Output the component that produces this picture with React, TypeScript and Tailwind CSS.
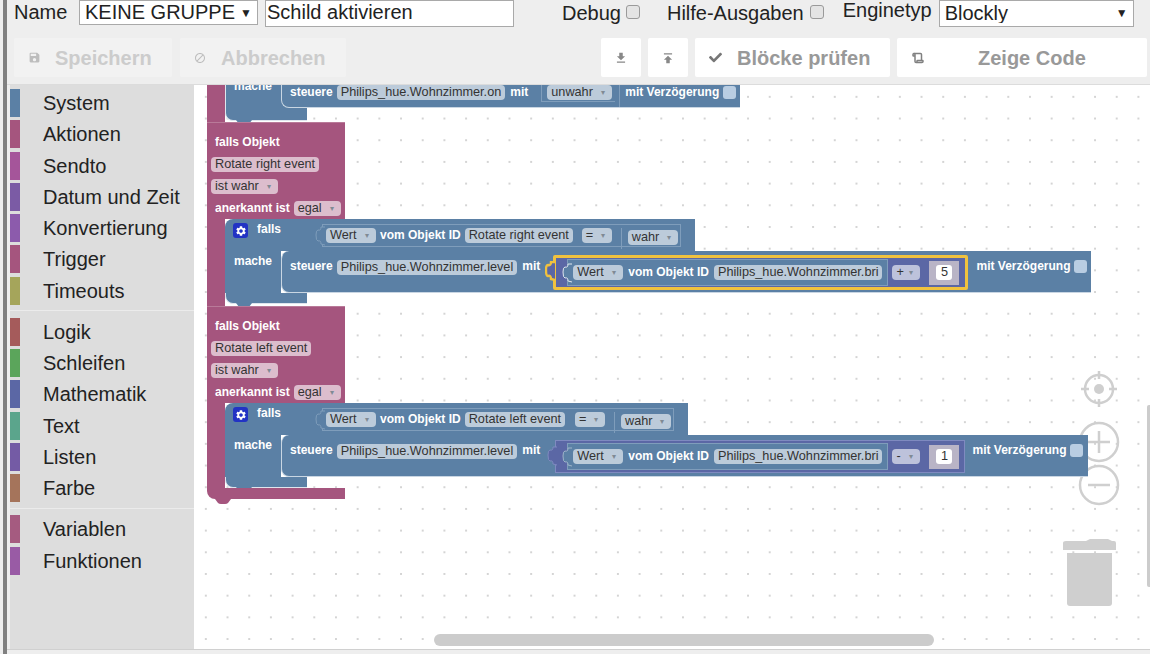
import React from 'react';
import { MdSave, MdBlock, MdFileDownload, MdSettings } from 'react-icons/md';
import { FaCheck } from 'react-icons/fa';
import { Scroll } from 'lucide-react';

const categories = [
  [
    { name: 'System', bar: 'bg-[#5b80a5]' },
    { name: 'Aktionen', bar: 'bg-[#a5557e]' },
    { name: 'Sendto', bar: 'bg-[#a5559a]' },
    { name: 'Datum und Zeit', bar: 'bg-[#7b5ba5]' },
    { name: 'Konvertierung', bar: 'bg-[#8c5bac]' },
    { name: 'Trigger', bar: 'bg-[#a5557e]' },
    { name: 'Timeouts', bar: 'bg-[#a5a55b]' },
  ],
  [
    { name: 'Logik', bar: 'bg-[#a55b5b]' },
    { name: 'Schleifen', bar: 'bg-[#5ba55b]' },
    { name: 'Mathematik', bar: 'bg-[#5b67a5]' },
    { name: 'Text', bar: 'bg-[#5ba58c]' },
    { name: 'Listen', bar: 'bg-[#745ba5]' },
    { name: 'Farbe', bar: 'bg-[#a5745b]' },
  ],
  [
    { name: 'Variablen', bar: 'bg-[#a55b80]' },
    { name: 'Funktionen', bar: 'bg-[#995ba5]' },
  ],
];

const Pill: React.FC<{ text: string; arrow?: boolean; className?: string }> = ({ text, arrow, className = 'bg-[#bccbda]' }) => (
  <span
    className={`flex h-[15px] shrink-0 items-center justify-between whitespace-nowrap rounded-[4px] pl-[4px] text-[12.7px] font-normal leading-[15px] text-[#333] ${arrow ? 'pr-[7px]' : 'pr-[4px]'} ${className}`}
  >
    {text}
    {arrow && <span className="text-[8px] leading-none text-[#808a94]">▾</span>}
  </span>
);

const Label: React.FC<{ text: string; className?: string }> = ({ text, className = '' }) => (
  <span className={`block h-[15px] shrink-0 whitespace-nowrap text-[12px] font-bold leading-[15px] text-white ${className}`}>{text}</span>
);

const Notch: React.FC<{ className: string; fill: string }> = ({ className, fill }) => (
  <svg viewBox="0 0 16 5" className={`absolute h-[5px] w-[16px] ${className}`}>
    <path d="M0 0 L3 4 Q4 5 6 5 L10 5 Q12 5 13 4 L16 0 Z" fill={fill} />
  </svg>
);

// puzzle tab on the left edge of a value block
const Tab: React.FC<{ className: string; fill: string; stroke: string; width?: number }> = ({ className, fill, stroke, width = 1 }) => (
  <svg viewBox="0 0 10 20" className={`absolute h-[20px] w-[10px] ${className}`}>
    <path d="M10 1 L6 1 Q6 5 3 4 Q1 4 1 9 Q1 15 3 15 Q6 14 6 18 L10 19" fill={fill} stroke={stroke} strokeWidth={width} />
  </svg>
);

const Check: React.FC<{ className?: string }> = ({ className = '' }) => (
  <span className={`h-[13px] w-[13px] shrink-0 rounded-[3px] bg-[#b9cde2] ${className}`} />
);

const ValueBlock: React.FC<{ event: string; wide: string }> = ({ event, wide }) => (
  <div className="relative mt-[5px] flex h-[23px] items-start border border-[#7f9dbb] pl-[3px] pt-[3px]">
    <Tab className="left-[-8px] top-[1px]" fill="#5b80a5" stroke="#7f9dbb" />
    <Pill text="Wert" arrow className="w-[50px] bg-[#bccbda]" />
    <Label text="vom Objekt ID" className="ml-[4px]" />
    <span className="ml-[4px]">
      <Pill text={event} />
    </span>
    <Pill text="=" arrow className={`w-[30px] bg-[#bccbda] ${wide}`} />
    <div className="relative ml-[9px] flex h-[21px] w-[59px] items-start border-l border-[#7f9dbb] pl-[6px] pt-[2px]">
      <Pill text="wahr" arrow className="w-[50px] bg-[#bccbda]" />
    </div>
  </div>
);

const MathBlock: React.FC<{ selected?: boolean; operator: string; value: string }> = ({ selected, operator, value }) => (
  <div
    className={
      selected
        ? 'relative ml-[13px] mt-[-5px] shrink-0 rounded-[2px] border-[3px] border-[#f0c23e]'
        : 'relative ml-[15px] mt-[-4px] shrink-0 border border-[#7f8ac0]'
    }
  >
    {selected ? (
      <Tab className="left-[-11px] top-[3px]" fill="#5b67a5" stroke="#f0c23e" width={2.4} />
    ) : (
      <Tab className="left-[-9px] top-[5px]" fill="#5b67a5" stroke="#7f8ac0" />
    )}
    <div className={`flex items-center bg-[#5b67a5] pl-[11px] ${selected ? 'h-[29px] pr-[6px]' : 'h-[31px] pr-[5px]'}`}>
      <div className="relative flex h-[27px] items-center border border-[#7f9dbb] bg-[#5b80a5] pl-[5px] pr-[5px]">
        <Tab className="left-[-6px] top-[3px]" fill="#5b80a5" stroke={selected ? '#dfe6ee' : '#9fb4c9'} />
        <Pill text="Wert" arrow className="w-[50px] bg-[#bccbda]" />
        <Label text="vom Objekt ID" className="ml-[5px]" />
        <span className="ml-[5px]">
          <Pill text="Philips_hue.Wohnzimmer.bri" />
        </span>
      </div>
      <span className="ml-[4px]">
        <Pill text={operator} arrow className="w-[28px] bg-[#bdc2db]" />
      </span>
      <div className="ml-[9px] flex h-[24px] w-[30px] items-center justify-center bg-[#b9b4c6]">
        <span className="h-[15px] w-[16px] rounded-[3px] bg-white text-center text-[12.7px] leading-[15px] text-[#333]">{value}</span>
      </div>
    </div>
  </div>
);

const SetRow: React.FC<{ event: string; children: React.ReactNode; gap: string; tight?: boolean }> = ({ event, children, gap, tight }) => (
  <div
    className={`relative flex h-[42px] shrink-0 items-start rounded-tl-[8px] rounded-bl-[8px] border-b border-l border-[#c9d6e3] bg-[#5b80a5] pl-[8px] pt-[8px] ${tight ? 'pr-[4px]' : 'pr-[5px]'}`}
  >
    <Label text="steuere" />
    <span className="ml-[4px] mt-[1px]">
      <Pill text={event} />
    </span>
    <Label text="mit" className="ml-[5px]" />
    <div className="mt-[1px]">{children}</div>
    <Label text="mit Verzögerung" className={gap} />
    <Check className="ml-[3px] mt-[1px]" />
  </div>
);

const TriggerBlock: React.FC<{ className: string; event: string; children: React.ReactNode; condition: React.ReactNode }> = ({
  className,
  event,
  children,
  condition,
}) => (
  <div className={`absolute flex flex-col ${className}`}>
    <div className="flex h-[97px] w-[138px] flex-col items-start gap-[7px] border-t border-[#b97a99] bg-[#a5557e] pl-[4px] pt-[12px]">
      <Label text="falls Objekt" className="ml-[4px]" />
      <Pill text={event} className="bg-[#dcbdcd]" />
      <Pill text="ist wahr" arrow className="w-[67px] bg-[#dcbdcd]" />
      <div className="flex items-start">
        <Label text="anerkannt ist" className="ml-[4px]" />
        <span className="ml-[4px]">
          <Pill text="egal" arrow className="w-[47px] bg-[#dcbdcd]" />
        </span>
      </div>
    </div>
    <div className="flex items-stretch">
      <div className="w-[18px] shrink-0 bg-[#a5557e]" />
      <div className="relative flex flex-col">
        <div className="flex h-[32px] w-fit items-start rounded-tl-[8px] bg-[#5b80a5] pr-[14px]">
          <div className="flex h-[32px] w-[97px] shrink-0 items-start pl-[8px] pt-[4px]">
            <span className="flex h-[15px] w-[15px] items-center justify-center rounded-[3px] bg-[#2233c4] text-white">
              <MdSettings size={12} />
            </span>
            <Label text="falls" className="ml-[9px] mt-[-1px]" />
          </div>
          {condition}
        </div>
        <div className="flex">
          <div className="w-[56px] shrink-0 bg-[#5b80a5] pl-[9px] pt-[3px]">
            <Label text="mache" />
          </div>
          {children}
        </div>
        <div className="relative h-[11px] w-[82px] rounded-bl-[8px] border-b border-l border-[#dfe6ee] bg-[#5b80a5]">
          <Notch className="left-[10px] top-[10px]" fill="#5b80a5" />
        </div>
        <div className="h-[2px] w-[82px]" />
      </div>
    </div>
  </div>
);

const Toolbar: React.FC = () => (
  <div className="flex h-[85px] shrink-0 flex-col border-b border-[#dcdcdc] bg-[#eeeeee] text-[20px] leading-[24px] text-[#222]">
    <div className="flex h-[38px] items-start pl-[7px]">
      <span className="w-[65px]">Name</span>
      <div className="relative">
        <select
          defaultValue="KEINE GRUPPE"
          className="block h-[25px] w-[179px] appearance-none rounded-none border border-[#a9a9a9] bg-white pl-[5px] text-[20px] leading-[23px]"
        >
          <option>KEINE GRUPPE</option>
        </select>
        <span className="pointer-events-none absolute right-[6px] top-[1px] text-[12px] text-[#222]">▼</span>
      </div>
      <input
        defaultValue="Schild aktivieren"
        className="ml-[7px] h-[27px] w-[249px] border border-[#a9a9a9] bg-white pb-[2px] pl-[1px] text-[20px] outline-none"
      />
      <span className="ml-[48px] mt-[1px]">Debug</span>
      <span className="ml-[5px] mt-[5px] h-[14px] w-[14px] rounded-[3px] border border-[#9a9a9a] bg-[#e4e4e4]" />
      <span className="ml-[27px] mt-[1px]">Hilfe-Ausgaben</span>
      <span className="ml-[6px] mt-[5px] h-[14px] w-[14px] rounded-[3px] border border-[#9a9a9a] bg-[#e4e4e4]" />
      <span className="ml-[19px] mt-[-2px]">Enginetyp</span>
      <div className="relative ml-[7px]">
        <select defaultValue="Blockly" className="block h-[27px] w-[195px] appearance-none rounded-none border border-[#a9a9a9] bg-white pb-[3px] pl-[5px] text-[20px]">
          <option>Blockly</option>
        </select>
        <span className="pointer-events-none absolute right-[6px] top-[1px] text-[12px] text-[#222]">▼</span>
      </div>
    </div>
    <div className="flex h-[40px] items-stretch gap-[7px] pb-[1px] pl-[7px] pr-[3px] font-bold">
      <button className="flex w-[158px] items-center rounded-[2px] bg-[#f2f2f2] pl-[14px] text-[#cccccc]">
        <MdSave size={13} className="text-[#bdbdbd]" />
        <span className="ml-[14px]">Speichern</span>
      </button>
      <button className="ml-[1px] flex w-[166px] items-center rounded-[2px] bg-[#f2f2f2] pl-[14px] text-[#cccccc]">
        <MdBlock size={12} className="text-[#bdbdbd]" />
        <span className="ml-[15px]">Abbrechen</span>
      </button>
      <button className="ml-auto flex w-[40px] items-center justify-center rounded-[2px] bg-white text-[#888]">
        <MdFileDownload size={14} />
      </button>
      <button className="flex w-[40px] items-center justify-center rounded-[2px] bg-white text-[#888]">
        <MdFileDownload size={14} className="rotate-180" />
      </button>
      <button className="flex w-[195px] items-center rounded-[2px] bg-white pl-[14px] text-[#999]">
        <FaCheck size={13} className="text-[#777]" />
        <span className="ml-[15px]">Blöcke prüfen</span>
      </button>
      <button className="flex w-[250px] items-center rounded-[2px] bg-white pl-[15px] text-[#999]">
        <Scroll size={12} className="text-[#808080]" strokeWidth={3} />
        <span className="ml-[54px]">Zeige Code</span>
      </button>
    </div>
  </div>
);

const Sidebar: React.FC = () => (
  <div className="ml-[3px] flex w-[184px] shrink-0 flex-col bg-[#dddddd] pt-[2.5px] text-[20px] text-[#222]">
    {categories.map((group, i) => (
      <div key={group[0].name} className={i > 0 ? 'mt-[4px] border-t border-[#ebebeb] pt-[5px]' : ''}>
        {group.map((item) => (
          <div key={item.name} className="flex h-[31.25px] items-center">
            <span className={`h-[28px] w-[10px] ${item.bar}`} />
            <span className="ml-[23px] whitespace-nowrap">{item.name}</span>
          </div>
        ))}
      </div>
    ))}
  </div>
);

const Controls: React.FC = () => (
  <svg viewBox="0 -20 60 245" className="absolute left-[866px] top-[280px] h-[245px] w-[60px]" fill="none" stroke="#cfcfcf" strokeWidth="2.5">
    <circle cx="39" cy="4" r="14" />
    <path d="M39 -14V-6M39 14V22M21 4H29M49 4H57" />
    <circle cx="39" cy="4" r="5" fill="#cfcfcf" stroke="none" />
    <circle cx="39" cy="57" r="19" />
    <path d="M39 46V68M28 57H50" />
    <circle cx="39" cy="100" r="19" />
    <path d="M28 100H50" />
    <path d="M3 158Q3 156 6 156H26L30 154H48L52 156H54Q56 156 56 158V165H3Z" fill="#cfcfcf" stroke="none" />
    <path d="M7 168H52V218Q52 221 49 221H10Q7 221 7 218Z" fill="#cfcfcf" stroke="none" />
  </svg>
);

const Workspace: React.FC = () => (
  <div className="relative min-w-0 flex-1 overflow-hidden bg-white bg-[radial-gradient(circle,#d4d4d4_1px,transparent_1.3px)] bg-[size:21.7px_21.7px] bg-[position:1px_1px]">
    <Controls />

    {/* tail of the block scrolled off the top */}
    <div className="absolute left-[13px] top-0 h-[37px] w-[18px] bg-[#a5557e]" />
    <div className="absolute left-[31px] top-0 h-[36px] w-[82px] rounded-bl-[8px] border-b border-l border-[#dfe6ee] bg-[#5b80a5] pl-[8px]">
      <span className="relative top-[-6px] block h-[14px] text-[12px] font-bold leading-[15px] text-white">mache</span>
      <Notch className="left-[10px] top-[35px]" fill="#5b80a5" />
    </div>
    <div className="absolute left-[87px] top-0 flex h-[23px] items-start rounded-bl-[8px] border-b border-l border-[#c9d6e3] bg-[#5b80a5] pl-[8px] pr-[4px]">
      <Label text="steuere" />
      <span className="ml-[4px]">
        <Pill text="Philips_hue.Wohnzimmer.on" />
      </span>
      <Label text="mit" className="ml-[5px]" />
      <span className="ml-[13px] flex h-[17px] w-[74px] items-start justify-end border-b border-l border-[#7f9dbb] pr-[3px]">
        <Pill text="unwahr" arrow className="w-[65px] bg-[#bccbda]" />
      </span>
      <span className="ml-[4px] w-px self-stretch bg-[#7f9dbb]" />
      <Label text="mit Verzögerung" className="ml-[5px]" />
      <Check className="ml-[4px] mt-[1px]" />
    </div>

    <TriggerBlock
      className="left-[13px] top-[37px]"
      event="Rotate right event"
      condition={<ValueBlock event="Rotate right event" wide="ml-[9px]" />}
    >
      <SetRow event="Philips_hue.Wohnzimmer.level" gap="ml-[8px]" tight>
        <MathBlock selected operator="+" value="5" />
      </SetRow>
    </TriggerBlock>

    <TriggerBlock
      className="left-[13px] top-[221px]"
      event="Rotate left event"
      condition={<ValueBlock event="Rotate left event" wide="ml-[10px]" />}
    >
      <SetRow event="Philips_hue.Wohnzimmer.level" gap="ml-[7px]">
        <MathBlock operator="-" value="1" />
      </SetRow>
    </TriggerBlock>
    <div className="absolute left-[13px] top-[403px] h-[11px] w-[138px] rounded-bl-[8px] bg-[#a5557e]">
      <Notch className="left-[8px] top-[11px]" fill="#a5557e" />
    </div>

    {/* scrollbars */}
    <div className="absolute right-0 top-[320px] h-[182px] w-[3px] rounded-l-[2px] bg-[#cccccc]" />
    <div className="absolute left-[240px] top-[549px] h-[12px] w-[500px] rounded-[6px] bg-[#cccccc]" />
  </div>
);

export default function App() {
  return (
    <div className="flex h-[654px] w-[1150px] overflow-hidden bg-[#eeeeee] font-['Liberation_Sans',Arial,sans-serif]">
      <div className="ml-[3px] w-[4px] shrink-0 bg-[#808080]" />
      <div className="flex min-w-0 flex-1 flex-col">
        <Toolbar />
        <div className="flex h-[564px] shrink-0">
          <Sidebar />
          <Workspace />
        </div>
        <div className="flex-1 border-t border-[#d0d0d0] bg-[#eeeeee]" />
      </div>
    </div>
  );
}
